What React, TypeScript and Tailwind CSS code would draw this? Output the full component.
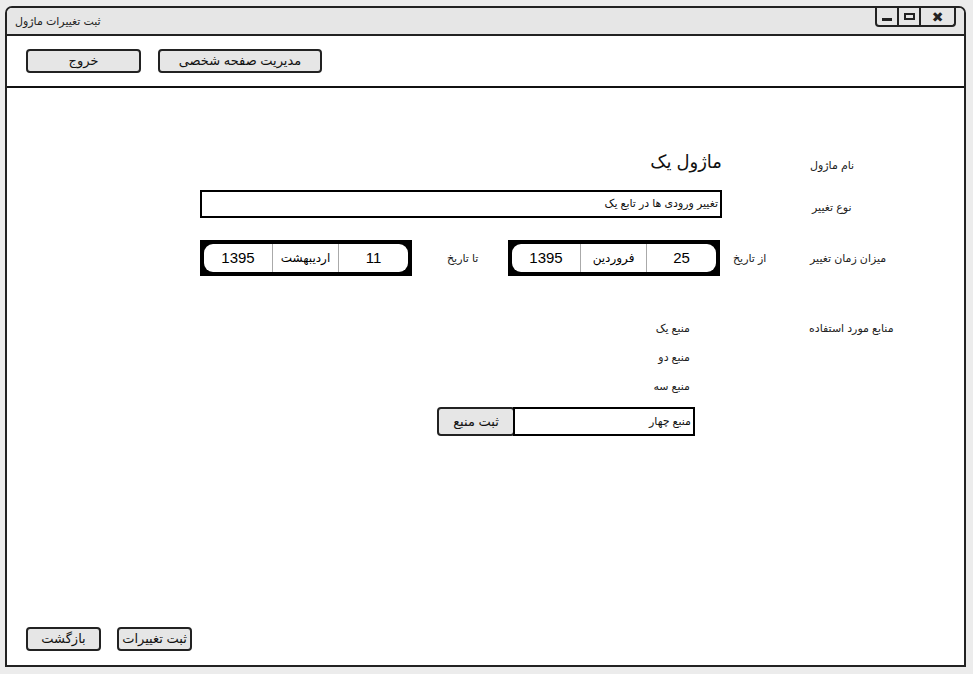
import React from 'react';

const font = { fontFamily: '"Liberation Sans", "DejaVu Sans", sans-serif' };

function Btn({ label, className = '' }: { label: string; className?: string }) {
  return (
    <div
      dir="rtl"
      className={`flex items-center justify-center rounded-[4px] border-2 border-[#222] bg-[#e6e6e6] text-[13px] text-[#111] ${className}`}
    >
      {label}
    </div>
  );
}

function DateBox({ day, month, year }: { day: string; month: string; year: string }) {
  return (
    <div className="flex h-[36px] w-[212px] bg-black p-[4px]">
      <div className="flex flex-1 rounded-[9px] bg-white">
        <div className="flex w-[68px] items-center justify-center text-[15px]">{year}</div>
        <div dir="rtl" className="flex w-[67px] items-center justify-center border-x border-[#aaa] text-[12px]">
          {month}
        </div>
        <div className="flex flex-1 items-center justify-center text-[15px]">{day}</div>
      </div>
    </div>
  );
}

function Label({ text, className = '' }: { text: string; className?: string }) {
  return (
    <div dir="rtl" className={`text-[11px] text-[#222] ${className}`}>
      {text}
    </div>
  );
}

export default function App() {
  const sources = ['منبع یک', 'منبع دو', 'منبع سه'];
  return (
    <div className="h-[674px] w-[973px] bg-[#ececec] pl-[5px] pt-[6px]" style={font}>
      <div className="flex h-[661px] w-[961px] flex-col rounded-t-[7px] border-2 border-[#222] bg-white">
        {/* title bar */}
        <div className="flex h-[28px] items-start justify-between rounded-t-[5px] border-b-2 border-[#222] bg-[#e6e6e6]">
          <div dir="rtl" className="ml-[8px] mt-[5px] text-[11px] text-[#222]">
            ثبت تغییرات ماژول
          </div>
          <div className="mr-[8px] flex h-[19px] w-[81px] rounded-b-[4px] border-2 border-t-0 border-[#222]">
            <div className="flex w-[22px] items-center justify-center border-r-2 border-[#222]">
              <div className="mt-[5px] h-[3px] w-[10px] bg-[#222]" />
            </div>
            <div className="flex w-[22px] items-center justify-center border-r-2 border-[#222]">
              <div className="h-[7px] w-[11px] border-2 border-[#222]" />
            </div>
            <div className="flex flex-1 items-center justify-center text-[14px] font-bold leading-none text-[#222]">
              ✖
            </div>
          </div>
        </div>

        {/* header */}
        <div className="flex h-[52px] items-center gap-[17px] border-b-2 border-[#111] pl-[19px]">
          <Btn label="خروج" className="h-[24px] w-[115px]" />
          <Btn label="مدیریت صفحه شخصی" className="h-[24px] w-[164px]" />
        </div>

        {/* body */}
        <div className="flex items-center pl-[193px] pt-[59px]">
          <div dir="rtl" className="flex h-[30px] w-[522px] items-center text-[18px] text-[#111]">
            ماژول یک
          </div>
          <Label text="نام ماژول" className="ml-[88px] pt-[6px]" />
        </div>

        <div className="mt-[13px] flex items-center pl-[193px]">
          <div
            dir="rtl"
            className="h-[28px] w-[522px] border-2 border-black pr-[2px] pt-[3px] text-[11px] text-[#111]"
          >
            تغییر ورودی ها در تابع یک
          </div>
          <Label text="نوع تغییر" className="ml-[90px] pt-[6px]" />
        </div>

        <div className="mt-[22px] flex items-center pl-[193px]">
          <DateBox day="11" month="اردیبهشت" year="1395" />
          <Label text="تا تاریخ" className="ml-[35px] w-[61px] text-left" />
          <DateBox day="25" month="فروردین" year="1395" />
          <Label text="از تاریخ" className="ml-[13px] w-[77px] text-left" />
          <Label text="میزان زمان تغییر" className="text-left" />
        </div>

        <div className="mt-[38px] flex pl-[430px]">
          <div className="flex w-[258px] flex-col">
            {sources.map((s) => (
              <div key={s} className="flex h-[29px] items-center justify-end">
                <Label text={s} className="pr-[5px]" />
              </div>
            ))}
            <div className="mt-[6px] flex h-[29px]">
              <Btn label="ثبت منبع" className="w-[78px]" />
              <div
                dir="rtl"
                className="-ml-[2px] flex-1 border-2 border-black pr-[2px] pt-[4px] text-[11px] text-[#111]"
              >
                منبع چهار
              </div>
            </div>
          </div>
          <div className="ml-[114px] flex h-[29px] items-center">
            <Label text="منابع مورد استفاده" />
          </div>
        </div>

        {/* footer */}
        <div className="mt-auto flex gap-[16px] pb-[14px] pl-[19px]">
          <Btn label="بازگشت" className="h-[24px] w-[75px]" />
          <Btn label="ثبت تغییرات" className="h-[24px] w-[75px]" />
        </div>
      </div>
    </div>
  );
}
